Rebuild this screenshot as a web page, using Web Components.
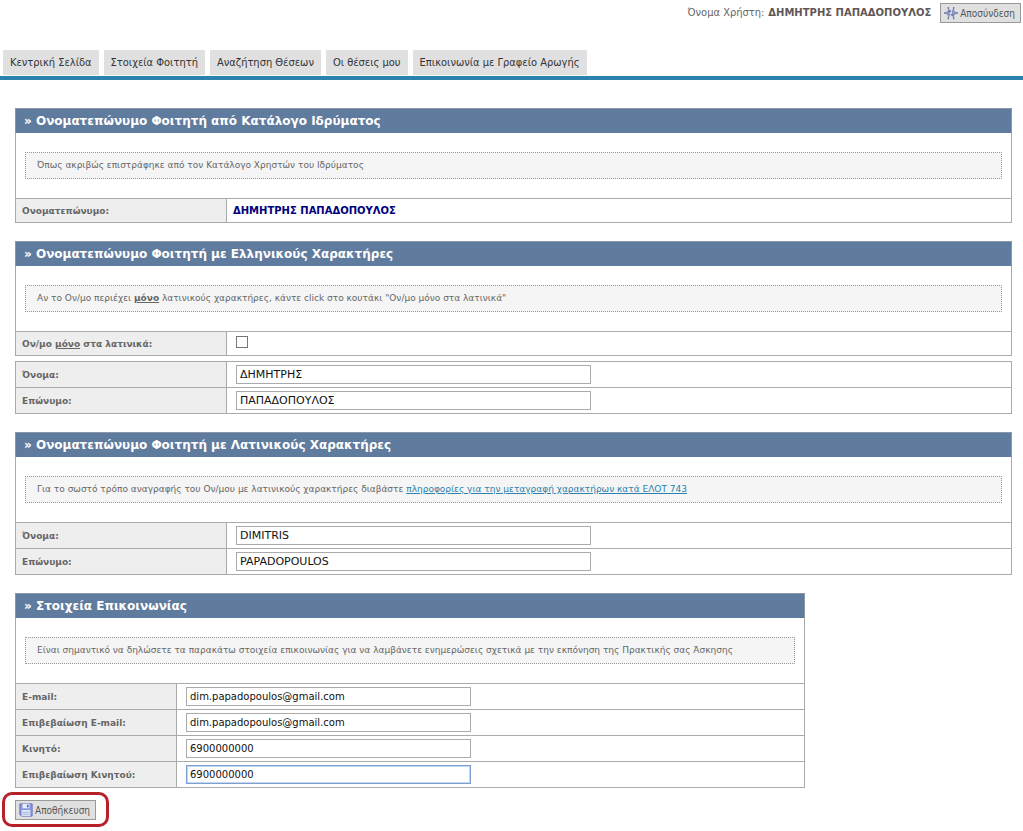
<!DOCTYPE html>
<html lang="el">
<head>
<meta charset="utf-8">
<title>Στοιχεία Φοιτητή</title>
<style>
  body { margin: 0; background: #fff; color: #666; font-family: "DejaVu Sans", Verdana, sans-serif; font-size: 10px; }
</style>
</head>
<body>
<student-page></student-page>

<script>
class BaseElement extends HTMLElement {
  constructor() {
    super();
    this.attachShadow({ mode: 'open' }).innerHTML = this.render();
  }
}

customElements.define('icon-button', class extends BaseElement {
  render() {
    const icons = {
      power: `<path d="M7 4H5L2 8l3 4h2z" fill="#8c99c4"/><path d="M9 4h2l3 4-3 4H9z" fill="#8c99c4"/>
          <path d="M0 8h3M13 8h3M5 1v3M11 1v3M5 12v3M11 12v3M5 6h3M8 10h3" fill="none" stroke="#6675a5" stroke-width="1.5"/>`,
      save: `<path d="M1 1h14v14H3l-2-2z" fill="#8c99dc" stroke="#5c68b5"/>
          <path d="M4 1h8v5H4z" fill="#e8ecfb"/><path d="M9 2h2v3H9z" fill="#5c68b5"/>
          <path d="M3 8h10v7H3z" fill="#dce3f8"/><path d="M4 11h8M4 13h8" stroke="#a5b0e4"/>`
    };
    return `<style>
      :host { display: inline-block; }
      button { display: flex; align-items: center; gap: 2px; height: 20px; margin: 0; padding: 0 5px 0 3px;
        border: 1px solid #999; background: #e0e0e0; color: #555; cursor: pointer;
        font: 10px "DejaVu Sans Condensed", Tahoma, sans-serif; white-space: nowrap; }
      svg { width: 14px; height: 14px; flex: none; }
    </style>
    <button type="button"><svg viewBox="0 0 16 16" aria-hidden="true">${icons[this.getAttribute('icon')]}</svg><slot></slot></button>`;
  }
});

customElements.define('user-bar', class extends BaseElement {
  render() {
    return `<style>
      :host { display: flex; justify-content: flex-end; align-items: center; gap: 9px; padding: 3px 2px 0 0;
        font: 11px/20px "DejaVu Sans Condensed", Tahoma, sans-serif; }
      span { display: flex; gap: 4px; }
      b { font-family: "DejaVu Sans", Verdana, sans-serif; font-size: 10px; color: #5f5757; }
    </style>
    <span>Όνομα Χρήστη: <b><slot></slot></b></span>
    <icon-button icon="power">Αποσύνδεση</icon-button>`;
  }
});

customElements.define('main-nav', class extends BaseElement {
  render() {
    const items = ['Κεντρική Σελίδα', 'Στοιχεία Φοιτητή', 'Αναζήτηση Θέσεων', 'Οι θέσεις μου', 'Επικοινωνία με Γραφείο Αρωγής'];
    return `<style>
      :host { display: block; margin-top: 27px; border-bottom: 4px solid #2a82ae; }
      nav { display: flex; gap: 5px; padding: 0 3px 1px; }
      a { padding: 0 7px; background: #e0e0e0; color: #333; text-decoration: none; white-space: nowrap;
        font: 11px/25px "DejaVu Sans Condensed", Tahoma, sans-serif; }
    </style>
    <nav>${items.map(t => `<a href="#">${t}</a>`).join('')}</nav>`;
  }
});

customElements.define('form-panel', class extends BaseElement {
  render() {
    return `<style>
      :host { display: block; margin-bottom: 18px; }
      h2 { margin: 0; padding: 0 8px; border: 1px solid #8898a8; border-bottom: 0; background: #5f7b9d; color: #fff;
        font-size: 12px; line-height: 24px; }
      .note { padding: 19px 9px; border: solid #aaa; border-width: 0 1px; }
      p { margin: 0; padding: 0 11px; border: 1px dotted #999; background: #f5f5f5; font-size: 9px; line-height: 25px; }
    </style>
    <section>
      <h2>» ${this.getAttribute('heading')}</h2>
      <div class="note"><p><slot name="note"></slot></p></div>
      <slot></slot>
    </section>`;
  }
});

customElements.define('field-group', class extends BaseElement {
  render() {
    return `<style>
      :host { display: block; border: solid #aaa; border-width: 0 1px 1px; }
      :host([apart]) { margin-top: 5px; }
    </style><slot></slot>`;
  }
});

customElements.define('form-field', class extends BaseElement {
  render() {
    const type = this.getAttribute('type') || 'text';
    const value = this.getAttribute('value') || '';
    let control = `<input id="f" type="${type}" value="${value}">`;
    if (type === 'checkbox') control = '<input id="f" type="checkbox">';
    if (type === 'output') control = `<output id="f">${value}</output>`;
    return `<style>
      :host { display: grid; grid-template-columns: var(--label-width, 211px) 1fr; border-top: 1px solid #aaa; min-height: 25px; }
      :host([type=output]), :host([type=checkbox]) { min-height: 23px; }
      label { display: flex; align-items: center; padding: 0 6px; border-right: 1px solid #aaa; background: #eee;
        font-size: 9px; font-weight: bold; color: #666; white-space: pre; }
      div { display: flex; align-items: center; padding: 0 9px; }
      input { box-sizing: border-box; width: var(--input-width, 355px); max-width: 100%; height: 19px; margin: 0; padding: 0 3px;
        border: 1px solid #aaa; border-radius: 0; outline: 0; background: #fff; color: #111;
        font: var(--input-size, 11px) "DejaVu Sans", Verdana, sans-serif; }
      :host([active]) input { border-color: #7a9fd0; box-shadow: inset 0 0 0 1px #c3d6ee; }
      input[type=checkbox] { appearance: none; width: 12px; height: 12px; padding: 0; border-color: #777; margin-bottom: 3px; }
      :host([type=output]) div { padding: 0 6px; }
      output { color: #00007c; font-weight: bold; font-size: 10px; }
    </style>
    <label for="f"><span><slot></slot></span></label>
    <div>${control}</div>`;
  }
});

customElements.define('student-page', class extends BaseElement {
  render() {
    return `<style>
      :host { display: block; }
      main { padding: 28px 11px 0 15px; }
      a { color: #2a82ae; }
      .contact { max-width: 790px; margin-bottom: 12px; --label-width: 161px; --input-width: 285px; --input-size: 10px; }
      .save { position: relative; display: table; margin-bottom: 10px; }
      .save::after { content: ""; position: absolute; inset: -8px -13px -7px; border: 3px solid #b8202a;
        border-radius: 10px; pointer-events: none; }
    </style>
    <user-bar>ΔΗΜΗΤΡΗΣ ΠΑΠΑΔΟΠΟΥΛΟΣ</user-bar>
    <main-nav></main-nav>
    <main>
      <form-panel heading="Ονοματεπώνυμο Φοιτητή από Κατάλογο Ιδρύματος">
        <span slot="note">Όπως ακριβώς επιστράφηκε από τον Κατάλογο Χρηστών του Ιδρύματος</span>
        <field-group><form-field type="output" value="ΔΗΜΗΤΡΗΣ ΠΑΠΑΔΟΠΟΥΛΟΣ">Ονοματεπώνυμο:</form-field></field-group>
      </form-panel>
      <form-panel heading="Ονοματεπώνυμο Φοιτητή με Ελληνικούς Χαρακτήρες">
        <span slot="note">Αν το Ον/μο περιέχει <b><u>μόνο</u></b> λατινικούς χαρακτήρες, κάντε click στο κουτάκι "Ον/μο μόνο στα λατινικά"</span>
        <field-group><form-field type="checkbox">Ον/μο <u>μόνο</u> στα λατινικά:</form-field></field-group>
        <field-group apart>
          <form-field value="ΔΗΜΗΤΡΗΣ">Όνομα:</form-field>
          <form-field value="ΠΑΠΑΔΟΠΟΥΛΟΣ">Επώνυμο:</form-field>
        </field-group>
      </form-panel>
      <form-panel heading="Ονοματεπώνυμο Φοιτητή με Λατινικούς Χαρακτήρες">
        <span slot="note">Για το σωστό τρόπο αναγραφής του Ον/μου με λατινικούς χαρακτήρες διαβάστε <a href="#">πληροφορίες για την μεταγραφή χαρακτήρων κατά ΕΛΟΤ 743</a></span>
        <field-group>
          <form-field value="DIMITRIS">Όνομα:</form-field>
          <form-field value="PAPADOPOULOS">Επώνυμο:</form-field>
        </field-group>
      </form-panel>
      <form-panel class="contact" heading="Στοιχεία Επικοινωνίας">
        <span slot="note">Είναι σημαντικό να δηλώσετε τα παρακάτω στοιχεία επικοινωνίας για να λαμβάνετε ενημερώσεις σχετικά με την εκπόνηση της Πρακτικής σας Άσκησης</span>
        <field-group>
          <form-field type="email" value="dim.papadopoulos@gmail.com">E-mail:</form-field>
          <form-field type="email" value="dim.papadopoulos@gmail.com">Επιβεβαίωση E-mail:</form-field>
          <form-field type="tel" value="6900000000">Κινητό:</form-field>
          <form-field type="tel" value="6900000000" active>Επιβεβαίωση Κινητού:</form-field>
        </field-group>
      </form-panel>
      <div class="save"><icon-button icon="save">Αποθήκευση</icon-button></div>
    </main>`;
  }
});
</script>
</body>
</html>
